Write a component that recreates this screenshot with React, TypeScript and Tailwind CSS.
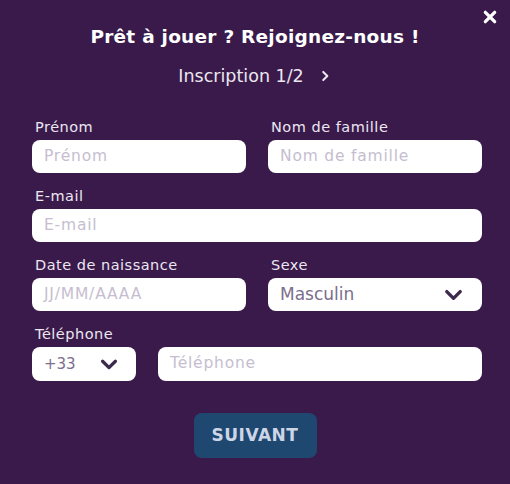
import React from "react";

const font = { fontFamily: '"DejaVu Sans", "Liberation Sans", sans-serif' };

function Chevron({ className = "" }: { className?: string }) {
  return (
    <svg viewBox="0 0 24 24" className={className} fill="none" stroke="currentColor" strokeWidth={3.5} strokeLinecap="round" strokeLinejoin="round">
      <path d="M5 9l7 7 7-7" />
    </svg>
  );
}

function Label({ children }: { children: React.ReactNode }) {
  return <div className="h-4 text-[14.5px] leading-4 tracking-[0.5px] text-[#ece6f0] pl-[3px] whitespace-nowrap">{children}</div>;
}

function Field({ label, placeholder, className = "" }: { label: string; placeholder: string; className?: string }) {
  return (
    <div className={`flex flex-col ${className}`}>
      <Label>{label}</Label>
      <div className="mt-[5px] h-[33px] rounded-lg bg-white flex items-center px-3 text-[15.5px] tracking-[0.8px] text-[#c6bed0]">{placeholder}</div>
    </div>
  );
}

export default function App() {
  return (
    <div className="w-[510px] h-[484px] bg-[#391a4b] relative overflow-hidden" style={font}>
      <div className="absolute right-[13px] top-[10px] text-white">
        <svg viewBox="0 0 12 12" className="w-[14px] h-[14px]" stroke="currentColor" strokeWidth={2.8} strokeLinecap="round">
          <path d="M2 2l8 8M10 2l-8 8" />
        </svg>
      </div>
      <div className="pt-[26px] text-center text-white font-bold text-[18.5px] leading-[22px] tracking-[0.25px]">
        Prêt à jouer ? Rejoignez-nous !
      </div>
      <div className="mt-[18px] flex items-center justify-center text-[#ece6f0] text-[17.5px] leading-[20px]">
        <span>Inscription 1/2</span>
        <svg viewBox="0 0 24 24" className="w-[14px] h-[14px] ml-[14px]" fill="none" stroke="currentColor" strokeWidth={3.5} strokeLinecap="round" strokeLinejoin="round">
          <path d="M9 5l7 7-7 7" />
        </svg>
      </div>
      <div className="mt-[33px] pl-[32px] pr-[28px] grid grid-cols-2 gap-x-[22px] gap-y-[15px]">
        <Field label="Prénom" placeholder="Prénom" />
        <Field label="Nom de famille" placeholder="Nom de famille" />
        <Field label="E-mail" placeholder="E-mail" className="col-span-2" />
        <Field label="Date de naissance" placeholder="JJ/MM/AAAA" />
        <div className="flex flex-col">
          <Label>Sexe</Label>
          <div className="mt-[5px] h-[33px] rounded-lg bg-white flex items-center justify-between pl-3 pr-[17px] text-[17px] text-[#7b6e8c]">
            <span>Masculin</span>
            <Chevron className="w-[23px] h-[23px] text-[#3b2a4c]" />
          </div>
        </div>
        <div className="col-span-2 flex flex-col">
          <Label>Téléphone</Label>
          <div className="mt-[5px] flex gap-[22px]">
            <div className="w-[104px] h-[34px] rounded-lg bg-white flex items-center justify-between pl-3 pr-[16px] text-[15px] text-[#7b6e8c]">
              <span>+33</span>
              <Chevron className="w-[22px] h-[22px] text-[#3b2a4c]" />
            </div>
            <div className="flex-1 h-[34px] rounded-lg bg-white flex items-center px-3 text-[15.5px] tracking-[0.8px] text-[#c6bed0]">Téléphone</div>
          </div>
        </div>
      </div>
      <div className="mt-[32px] flex justify-center">
        <div className="w-[123px] h-[45px] rounded-lg bg-[#1f4871] flex items-center justify-center text-[#cdd6e6] font-bold text-[17px] tracking-[0.5px]">
          SUIVANT
        </div>
      </div>
    </div>
  );
}
